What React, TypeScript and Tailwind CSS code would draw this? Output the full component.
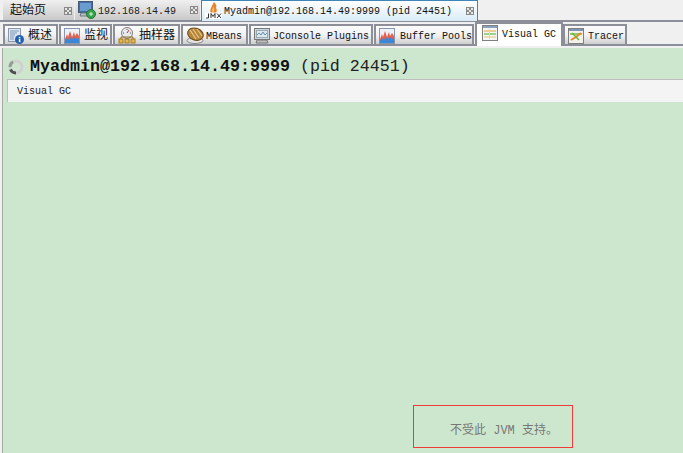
const mono = "font-['Liberation_Mono','Noto_Sans_CJK_SC',monospace]";

function Close() {
  return (
    <svg width="8" height="8" viewBox="0 0 8 8" className="shrink-0">
      <rect width="8" height="8" fill="#8a8a8a" />
      <path d="M1 1h2v2H1zM5 1h2v2H5zM3 3h2v2H3zM1 5h2v2H1zM5 5h2v2H5z" fill="#e8e8e8" />
    </svg>
  );
}

function Overview() {
  return (
    <svg width="16" height="16" viewBox="0 0 16 16" className="shrink-0">
      <rect x="0.5" y="0.5" width="12" height="13" fill="#dfe8f2" stroke="#8a97a8" />
      <path d="M2 3h9M2 5h7M2 7h5M2 9h4M2 11h4" stroke="#7b93b5" />
      <circle cx="11.5" cy="11.5" r="4.5" fill="#1f5fae" />
      <rect x="10.8" y="8.8" width="1.6" height="1.4" fill="#fff" />
      <rect x="10.8" y="10.8" width="1.6" height="3.4" fill="#fff" />
    </svg>
  );
}

function Chart() {
  return (
    <svg width="16" height="16" viewBox="0 0 16 16" className="shrink-0">
      <rect x="0.5" y="0.5" width="15" height="15" fill="#eef2f8" stroke="#8795ad" />
      <path d="M1 11l2-5 1 3 2-6 2 6 2-5 1 4 2-3 2 3v7H1z" fill="#e6604f" />
      <path d="M1 13l2-3 2 2 2-3 2 2 2-2 2 2 2-1v5H1z" fill="#3c86d8" />
    </svg>
  );
}

function Sampler() {
  return (
    <svg width="18" height="17" viewBox="0 0 18 17" className="shrink-0">
      <circle cx="9" cy="6" r="5.5" fill="#e6e9ee" stroke="#7f7f7f" />
      <path d="M9 6l2-3" stroke="#c03a2a" />
      <path d="M9 2v1M5 6h1M12 6h1" stroke="#555" />
      <path d="M3 12V10h12v2M9 11v1" stroke="#8a6a20" fill="none" />
      <rect x="1" y="12" width="4" height="4" fill="#e9b949" stroke="#a07b22" />
      <rect x="7" y="12" width="4" height="4" fill="#e9b949" stroke="#a07b22" />
      <rect x="13" y="12" width="4" height="4" fill="#e9b949" stroke="#a07b22" />
    </svg>
  );
}

function Beans() {
  return (
    <svg width="18" height="17" viewBox="0 0 18 17" className="shrink-0">
      <ellipse cx="9" cy="13.5" rx="8" ry="3" fill="#e4e4e4" stroke="#888" />
      <ellipse cx="9.5" cy="7" rx="8" ry="6" fill="#b5853a" stroke="#6d4a17" transform="rotate(20 9 7)" />
      <path d="M4 3l6 9M7 2l6 9M11 2l5 7" stroke="#e7c98a" strokeWidth="1.2" />
    </svg>
  );
}

function Monitor() {
  return (
    <svg width="17" height="16" viewBox="0 0 17 16" className="shrink-0">
      <rect x="0.5" y="0.5" width="15" height="11" fill="#c9d6e4" stroke="#777" />
      <rect x="2.5" y="2.5" width="11" height="7" fill="#dbe6f0" stroke="#9aa" />
      <path d="M3 7l2-2 2 2 2-3 2 3 2-2" stroke="#6a8fb0" fill="none" />
      <path d="M3 12h10l1 3H2z" fill="#bdbdbd" stroke="#777" />
    </svg>
  );
}

function Grid() {
  return (
    <svg width="16" height="16" viewBox="0 0 16 16" className="shrink-0">
      <rect x="0.5" y="0.5" width="15" height="15" fill="#f6f6f4" stroke="#7e7e7e" />
      <rect x="1" y="1" width="14" height="2" fill="#8ba0bd" />
      <path d="M2 6h5" stroke="#e0a23a" />
      <path d="M8 6h6" stroke="#e0a23a" />
      <path d="M2 9h12" stroke="#3fb01e" />
      <path d="M2 12h12" stroke="#e2c27a" />
      <path d="M7.5 4v10" stroke="#d7d7d7" />
    </svg>
  );
}

function TracerIcon() {
  return (
    <svg width="16" height="16" viewBox="0 0 16 16" className="shrink-0">
      <rect x="0.5" y="0.5" width="15" height="15" fill="#f2f2ea" stroke="#7e7e7e" />
      <rect x="1" y="1" width="14" height="2" fill="#7f96b5" />
      <path d="M2 6h12" stroke="#6cb33f" strokeWidth="1.4" />
      <path d="M3 12l5-3 5-4" stroke="#e8872c" strokeWidth="2" fill="none" />
      <path d="M4 5l7 7" stroke="#6cb33f" strokeWidth="1.4" />
    </svg>
  );
}

function Host() {
  return (
    <svg width="18" height="18" viewBox="0 0 18 18" className="shrink-0">
      <rect x="0.5" y="0.5" width="14" height="11" fill="#3f6ea8" stroke="#475a72" />
      <rect x="2" y="2" width="11" height="8" fill="#6b9bd1" />
      <path d="M3 12h9l1 3H2z" fill="#b7bfc9" stroke="#6c7683" />
      <circle cx="13" cy="13" r="4.5" fill="#37a24a" stroke="#1f7a33" />
      <path d="M11 13h4M13 11v4" stroke="#d9f2dc" />
    </svg>
  );
}

function Jmx() {
  return (
    <svg width="17" height="18" viewBox="0 0 17 18" className="shrink-0">
      <path d="M9 0c2 2 3 4 2 6 1 1 1 3 0 5H6C4 8 7 4 9 0z" fill="#e8842a" />
      <path d="M8.500 5c1 1 1 3 0 5h-1c-1-2 0-3 1-5z" fill="#f7c76a" />
      <rect x="0" y="10.500" width="17" height="6.500" fill="#fff" />
      <path d="M3.500 11.500v4.500H1M6 16v-4.500l2 3 2-3V16M12 11.500l4 4.500M16 11.500l-4 4.500" stroke="#333" fill="none" />
    </svg>
  );
}

function Spinner() {
  return (
    <svg width="16" height="16" viewBox="0 0 16 16" className="shrink-0">
      <circle cx="8" cy="8" r="6" fill="none" stroke="#d0d0d0" strokeWidth="3" />
      <path d="M2.500 10.500A6 6 0 0 0 8 14" fill="none" stroke="#4f4f4f" strokeWidth="3" />
      <path d="M2 8A6 6 0 0 1 5 2.800" fill="none" stroke="#9a9a9a" strokeWidth="3" />
    </svg>
  );
}

const inner = [
  { label: "概述", icon: <Overview />, w: "w-[55px]", cn: true, gap: "gap-[4px]" },
  { label: "监视", icon: <Chart />, w: "w-[53px]", cn: true, gap: "gap-[4px]" },
  { label: "抽样器", icon: <Sampler />, w: "w-[67px]", cn: true, gap: "gap-[3px]" },
  { label: "MBeans", icon: <Beans />, w: "w-[67px]", cn: false, gap: "gap-[2px]" },
  { label: "JConsole Plugins", icon: <Monitor />, w: "w-[124px]", cn: false, gap: "gap-[2px]" },
  { label: "Buffer Pools", icon: <Chart />, w: "w-[100px]", cn: false, gap: "gap-[5px]" },
];

function InnerTab({ label, icon, w, cn, gap }: { label: string; icon: React.ReactNode; w: string; cn: boolean; gap: string }) {
  return (
    <div
      className={`${w} ${gap} h-[20px] mr-[1px] shrink-0 flex items-center pl-[3px] pt-[1px] border-t-2 border-x-2 border-[#8d8f98] bg-gradient-to-b from-[#fbfbfb] via-[#f2f2f2] to-[#cfcfcf] text-[#111] whitespace-pre ${cn ? "text-[12px]" : "text-[10px]"}`}
    >
      {icon}
      <span className="pt-[1px]">{label}</span>
    </div>
  );
}

export default function App() {
  return (
    <div className={`relative w-[683px] h-[453px] overflow-hidden bg-[#f0f0f0] ${mono}`}>
      {/* document tabs */}
      <div className="h-[22px] flex items-stretch border-b-2 border-[#8d8f98] pl-[3px]">
        <div className="w-[71px] mr-[1px] flex items-center justify-between pl-[7px] pr-[2px] pt-[2px] bg-gradient-to-b from-[#f0f0f0] to-[#c9c9c9] text-[12px] text-[#111]">
          <span>起始页</span>
          <Close />
        </div>
        <div className="w-[125px] mr-[1px] flex items-center pl-[3px] pr-[2px] gap-[2px] bg-gradient-to-b from-[#f0f0f0] to-[#c9c9c9] text-[10px] text-[#222]">
          <Host />
          <span className="flex-1 pt-[2px]">192.168.14.49</span>
          <Close />
        </div>
        <div className="w-[277px] h-[21px] flex items-center pl-[3px] pr-[3px] gap-[2px] border-x border-t border-[#3f86b8] bg-gradient-to-b from-[#ffffff] to-[#d9ecf7] text-[10px] text-[#111] whitespace-pre">
          <Jmx />
          <span className="flex-1 pt-[1px]">Myadmin@192.168.14.49:9999 (pid 24451)</span>
          <Close />
        </div>
      </div>
      {/* view tabs */}
      <div className="h-[24px] pl-[3px] flex items-end border-b-2 border-[#8d8f98]">
        {inner.map((t) => (
          <InnerTab key={t.label} {...t} />
        ))}
        <div className="relative z-10 w-[88px] h-[24px] mb-[-2px] shrink-0 flex items-start pt-[1px] pl-[5px] gap-[4px] border-t-2 border-x-2 border-[#8d8f98] bg-white text-[10px] text-[#111] whitespace-pre">
          <Grid />
          <span className="pt-[2px]">Visual GC</span>
        </div>
        <InnerTab label="Tracer" icon={<TracerIcon />} w="w-[64px]" cn={false} gap="gap-[4px]" />
      </div>
      {/* content */}
      <div className="mt-[2px] ml-[2px] h-[405px] border-l border-[#a8a8a8] bg-[#cde7cf]">
        <div className="h-[31px] flex items-center pl-[5px] gap-[6px] pt-[7px] text-[#111] whitespace-pre">
          <Spinner />
          <span className="text-[16.67px] leading-none">
            <b className="font-bold">Myadmin@192.168.14.49:9999</b>
            <span className="text-[#222]"> (pid 24451)</span>
          </span>
        </div>
        <div className="h-[23px] ml-[4px] flex items-center pl-[9px] border-t border-l border-[#bdbdbd] bg-[#f4f4f4] text-[10px] text-[#222]">
          Visual GC
        </div>
      </div>
      {/* message box */}
      <div className="absolute left-[413px] top-[405px] w-[160px] h-[43px] border border-[#f33a3a] flex items-center pl-[36px] pt-[9px] text-[12px] text-[#777] whitespace-pre">
        不受此 JVM 支持。
      </div>
    </div>
  );
}
